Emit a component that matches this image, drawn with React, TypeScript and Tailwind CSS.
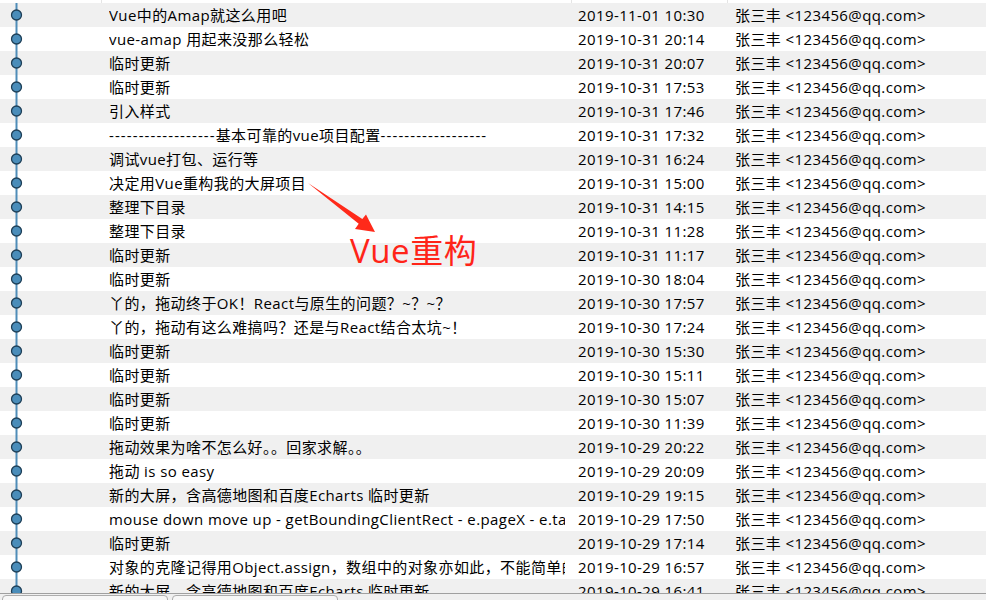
import React from "react";

const DASH = "------------------";

const rows: [React.ReactNode, string][] = [
  ["Vue中的Amap就这么用吧", "2019-11-01 10:30"],
  ["vue-amap 用起来没那么轻松", "2019-10-31 20:14"],
  ["临时更新", "2019-10-31 20:07"],
  ["临时更新", "2019-10-31 17:53"],
  ["引入样式", "2019-10-31 17:46"],
  [
    <>
      <span className="tracking-[1.1px]">{DASH}</span>基本可靠的vue项目配置<span className="tracking-[1.1px]">{DASH}</span>
    </>,
    "2019-10-31 17:32",
  ],
  ["调试vue打包、运行等", "2019-10-31 16:24"],
  ["决定用Vue重构我的大屏项目", "2019-10-31 15:00"],
  ["整理下目录", "2019-10-31 14:15"],
  ["整理下目录", "2019-10-31 11:28"],
  ["临时更新", "2019-10-31 11:17"],
  ["临时更新", "2019-10-30 18:04"],
  ["丫的，拖动终于OK！React与原生的问题？~？~？", "2019-10-30 17:57"],
  ["丫的，拖动有这么难搞吗？还是与React结合太坑~！", "2019-10-30 17:24"],
  ["临时更新", "2019-10-30 15:30"],
  ["临时更新", "2019-10-30 15:11"],
  ["临时更新", "2019-10-30 15:07"],
  ["临时更新", "2019-10-30 11:39"],
  ["拖动效果为啥不怎么好。。回家求解。。", "2019-10-29 20:22"],
  ["拖动 is so easy", "2019-10-29 20:09"],
  ["新的大屏，含高德地图和百度Echarts 临时更新", "2019-10-29 19:15"],
  ["mouse down move up - getBoundingClientRect - e.pageX - e.target.offsetLeft", "2019-10-29 17:50"],
  ["临时更新", "2019-10-29 17:14"],
  ["对象的克隆记得用Object.assign，数组中的对象亦如此，不能简单的赋值", "2019-10-29 16:57"],
  ["新的大屏，含高德地图和百度Echarts 临时更新", "2019-10-29 16:41"],
];

function Graph() {
  return (
    <svg width="102" height="24" className="block shrink-0">
      <line x1="16.5" y1="0" x2="16.5" y2="24" stroke="#4f8db8" strokeWidth="2" />
      <circle cx="16.5" cy="12" r="5" fill="#4a8dba" stroke="#1e3f57" strokeWidth="1.3" />
    </svg>
  );
}

export default function App() {
  return (
    <div
      className="relative w-[986px] h-[600px] flex flex-col overflow-hidden bg-white text-[15px] tracking-[0.4px] text-black"
      style={{ fontFamily: "'Open Sans','Noto Sans CJK SC',sans-serif" }}
    >
      <div className="h-[3px] flex shrink-0 bg-white">
        <div className="w-[102px] border-r border-[#e5e5e5]" />
        <div className="w-[470px] border-r border-[#e5e5e5]" />
        <div className="w-[156px] border-r border-[#e5e5e5]" />
        <div className="flex-1" />
      </div>
      <div className="flex-1 overflow-hidden flex flex-col">
        {rows.map(([msg, date], i) => (
          <div
            key={i}
            className={`h-6 shrink-0 flex items-center ${i % 2 === 0 ? "bg-[#f0f0f0]" : "bg-white"}`}
          >
            <Graph />
            <div className="w-[470px] shrink-0 pl-[7px] pr-[7px]">
              <div className="overflow-hidden whitespace-nowrap leading-6">{msg}</div>
            </div>
            <div className="w-[156px] shrink-0 pl-[6px] whitespace-nowrap leading-6">{date}</div>
            <div className="flex-1 pl-[7px] whitespace-nowrap leading-6">张三丰 &lt;123456@qq.com&gt;</div>
          </div>
        ))}
      </div>
      <div className="h-[7px] shrink-0 border-t border-[#a0a0a0] bg-[#f0f0f0] flex gap-[4px] pl-[2px] pt-[1px]">
        <div className="w-[166px] h-[10px] rounded-[4px] border border-[#adadad] bg-[#f7f7f7]" />
        <div className="w-[166px] h-[10px] rounded-[4px] border border-[#adadad] bg-[#f7f7f7]" />
      </div>

      <svg className="absolute left-0 top-0 pointer-events-none" width="986" height="600">
        <polygon
          points="308,183 362.3,219 366,214.5 375,232 355,229 358.7,223.8"
          fill="#ff2a1a"
        />
      </svg>
      <div className="absolute left-[350px] top-[227px] text-[33px] leading-[48px] tracking-[0.6px] text-[#ff2418] whitespace-nowrap">
        Vue重构
      </div>
    </div>
  );
}
